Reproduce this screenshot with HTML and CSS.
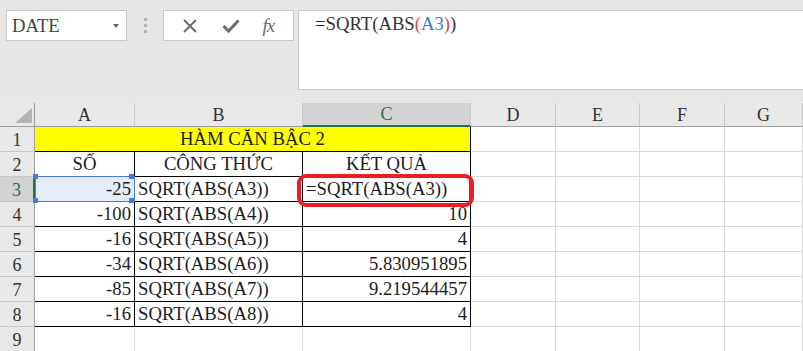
FILE: index.html
```html
<!DOCTYPE html>
<html>
<head>
<meta charset="utf-8">
<link rel="stylesheet" href="styles.css">
</head>
<body>
<div class="app">
  <div class="toolbar">
    <div class="namebox">
      <span class="name">DATE</span>
      <span class="caret"></span>
    </div>
    <div class="grip"><i></i><i></i><i></i></div>
    <div class="btns">
      <svg class="ic" width="18" height="18" viewBox="0 0 18 18"><path d="M3 3 L15 15 M15 3 L3 15" stroke="#6b6b6b" stroke-width="2" fill="none"/></svg>
      <svg class="ic" width="20" height="18" viewBox="0 0 20 18"><path d="M2.5 9 L7.5 14 L17.5 3.5" stroke="#6b6b6b" stroke-width="3" fill="none"/></svg>
      <span class="fx">fx</span>
    </div>
    <div class="formula"><span>=SQRT(ABS</span><span class="red">(</span><span class="blue">A3</span><span class="red">)</span><span>)</span></div>
  </div>
  <div class="sheet">
    <div class="h corner"><span class="tri"></span></div>
    <div class="h">A</div>
    <div class="h">B</div>
    <div class="h hsel">C</div>
    <div class="h">D</div>
    <div class="h">E</div>
    <div class="h">F</div>
    <div class="h">G</div>

    <div class="r">1</div>
    <div class="c title">HÀM CĂN BẬC 2</div>
    <div class="c"></div><div class="c"></div><div class="c"></div><div class="c"></div>

    <div class="r">2</div>
    <div class="c b ctr">SỐ</div>
    <div class="c b ctr">CÔNG THỨC</div>
    <div class="c b ctr">KẾT QUẢ</div>
    <div class="c"></div><div class="c"></div><div class="c"></div><div class="c"></div>

    <div class="r rsel">3</div>
    <div class="c b rt sel">-25</div>
    <div class="c b">SQRT(ABS(A3))</div>
    <div class="c b active">=SQRT(ABS(A3))<span class="ring"></span></div>
    <div class="c"></div><div class="c"></div><div class="c"></div><div class="c"></div>

    <div class="r">4</div>
    <div class="c b rt">-100</div>
    <div class="c b">SQRT(ABS(A4))</div>
    <div class="c b rt">10</div>
    <div class="c"></div><div class="c"></div><div class="c"></div><div class="c"></div>

    <div class="r">5</div>
    <div class="c b rt">-16</div>
    <div class="c b">SQRT(ABS(A5))</div>
    <div class="c b rt">4</div>
    <div class="c"></div><div class="c"></div><div class="c"></div><div class="c"></div>

    <div class="r">6</div>
    <div class="c b rt">-34</div>
    <div class="c b">SQRT(ABS(A6))</div>
    <div class="c b rt">5.830951895</div>
    <div class="c"></div><div class="c"></div><div class="c"></div><div class="c"></div>

    <div class="r">7</div>
    <div class="c b rt">-85</div>
    <div class="c b">SQRT(ABS(A7))</div>
    <div class="c b rt">9.219544457</div>
    <div class="c"></div><div class="c"></div><div class="c"></div><div class="c"></div>

    <div class="r">8</div>
    <div class="c b rt">-16</div>
    <div class="c b">SQRT(ABS(A8))</div>
    <div class="c b rt">4</div>
    <div class="c"></div><div class="c"></div><div class="c"></div><div class="c"></div>

    <div class="r">9</div>
    <div class="c"></div><div class="c"></div><div class="c"></div><div class="c"></div><div class="c"></div><div class="c"></div><div class="c"></div>
  </div>
</div>
</body>
</html>
```
FILE: styles.css
```css
html, body {
  margin: 0;
  padding: 0;
  background: #e6e6e6;
  overflow: hidden;
}
.app {
  width: 803px;
  height: 351px;
  overflow: hidden;
  font-family: "Liberation Serif", "Times New Roman", serif;
  color: #1c1c1c;
}
.toolbar {
  display: flex;
  align-items: flex-start;
  height: 103px;
  box-sizing: border-box;
  padding: 10px 0 0 6px;
  background: #e6e6e6;
}
.namebox {
  width: 121px;
  height: 31px;
  box-sizing: border-box;
  background: #fff;
  border: 1px solid #c9c9c9;
  display: flex;
  align-items: center;
  justify-content: space-between;
  padding: 0 7px 0 5px;
}
.name {
  font-size: 18.7px;
  color: #444;
  line-height: 1;
  padding-top: 1px;
}
.caret {
  width: 0;
  height: 0;
  border-left: 3.5px solid transparent;
  border-right: 3.5px solid transparent;
  border-top: 4px solid #666;
}
.grip {
  width: 36px;
  height: 31px;
  display: flex;
  flex-direction: column;
  align-items: center;
  justify-content: center;
  gap: 3px;
}
.grip i {
  display: block;
  width: 3px;
  height: 3px;
  background: #b3b3b3;
}
.btns {
  width: 131px;
  height: 31px;
  box-sizing: border-box;
  background: #fff;
  border: 1px solid #c9c9c9;
  display: flex;
  align-items: center;
  justify-content: space-around;
  padding: 0 8px 0 6px;
}
.fx {
  font-style: italic;
  font-size: 19px;
  color: #6b6b6b;
  letter-spacing: -1px;
}
.formula {
  flex: 1;
  margin-left: 4px;
  margin-right: -4px;
  height: 80px;
  box-sizing: border-box;
  background: #fff;
  border: 1px solid #c9c9c9;
  padding: 2px 0 0 16px;
  font-size: 18.7px;
  color: #333;
}
.formula .red { color: #e0424a; }
.formula .blue { color: #3d7bd0; }

.sheet {
  display: grid;
  grid-template-columns: 35px 100px 168px 168px 85px 84px 85px 78px;
  grid-template-rows: 24px repeat(9, 25px);
  background: #fff;
  font-size: 18.7px;
}
.sheet > div {
  box-sizing: border-box;
  border-right: 1px solid #d9d9d9;
  border-bottom: 1px solid #d9d9d9;
  white-space: nowrap;
}
.sheet > .h {
  background: #e8e8e8;
  border-right-color: #c8c8c8;
  border-bottom-color: #9f9f9f;
  display: flex;
  align-items: center;
  justify-content: center;
  font-size: 18px;
  color: #333;
  padding-top: 1px;
}
.sheet > .corner {
  position: relative;
  border-right-color: #9f9f9f;
}
.tri {
  position: absolute;
  right: 2px;
  bottom: 3px;
  width: 0;
  height: 0;
  border-left: 17px solid transparent;
  border-bottom: 15px solid #b5b5b5;
}
.sheet > .hsel {
  background: #d3d3d3;
  color: #217346;
  border-bottom: 2px solid #217346;
}
.sheet > .r {
  background: #e8e8e8;
  border-right-color: #9f9f9f;
  border-bottom-color: #c8c8c8;
  display: flex;
  align-items: center;
  justify-content: center;
  font-size: 18px;
  color: #333;
  padding-top: 2px;
}
.sheet > .rsel {
  background: #d3d3d3;
  color: #217346;
  border-right: 2px solid #217346;
}
.c {
  display: flex;
  align-items: flex-end;
  padding: 0 3px 1px 3px;
  color: #1c1c1c;
  line-height: 22px;
}
.sheet > .title {
  grid-column: span 3;
  background: #ffff00;
  justify-content: center;
  border-right-color: #000;
  border-bottom-color: #000;
}
.sheet > .b {
  border-right-color: #000;
  border-bottom-color: #000;
}
.ctr { justify-content: center; }
.rt { justify-content: flex-end; }
.sheet > .sel {
  position: relative;
  background: #e4ecf8;
}
.sel::before {
  content: "";
  position: absolute;
  left: 0;
  top: -1px;
  right: -1px;
  bottom: -1px;
  border: 1px solid #4a7cc9;
}
.sel::after {
  content: "";
  position: absolute;
  left: -2px;
  top: -3px;
  width: 5px;
  height: 5px;
  background: #4a7cc9;
  box-shadow: 96px 0 0 #4a7cc9, 0 24px 0 #4a7cc9, 96px 24px 0 #4a7cc9;
}
.sheet > .active {
  position: relative;
  border-right: 2px solid #217346;
}
.ring {
  position: absolute;
  left: -6px;
  top: -3px;
  right: -5px;
  bottom: -6px;
  border: 4px solid #ec1c24;
  border-radius: 9px;
}
```
